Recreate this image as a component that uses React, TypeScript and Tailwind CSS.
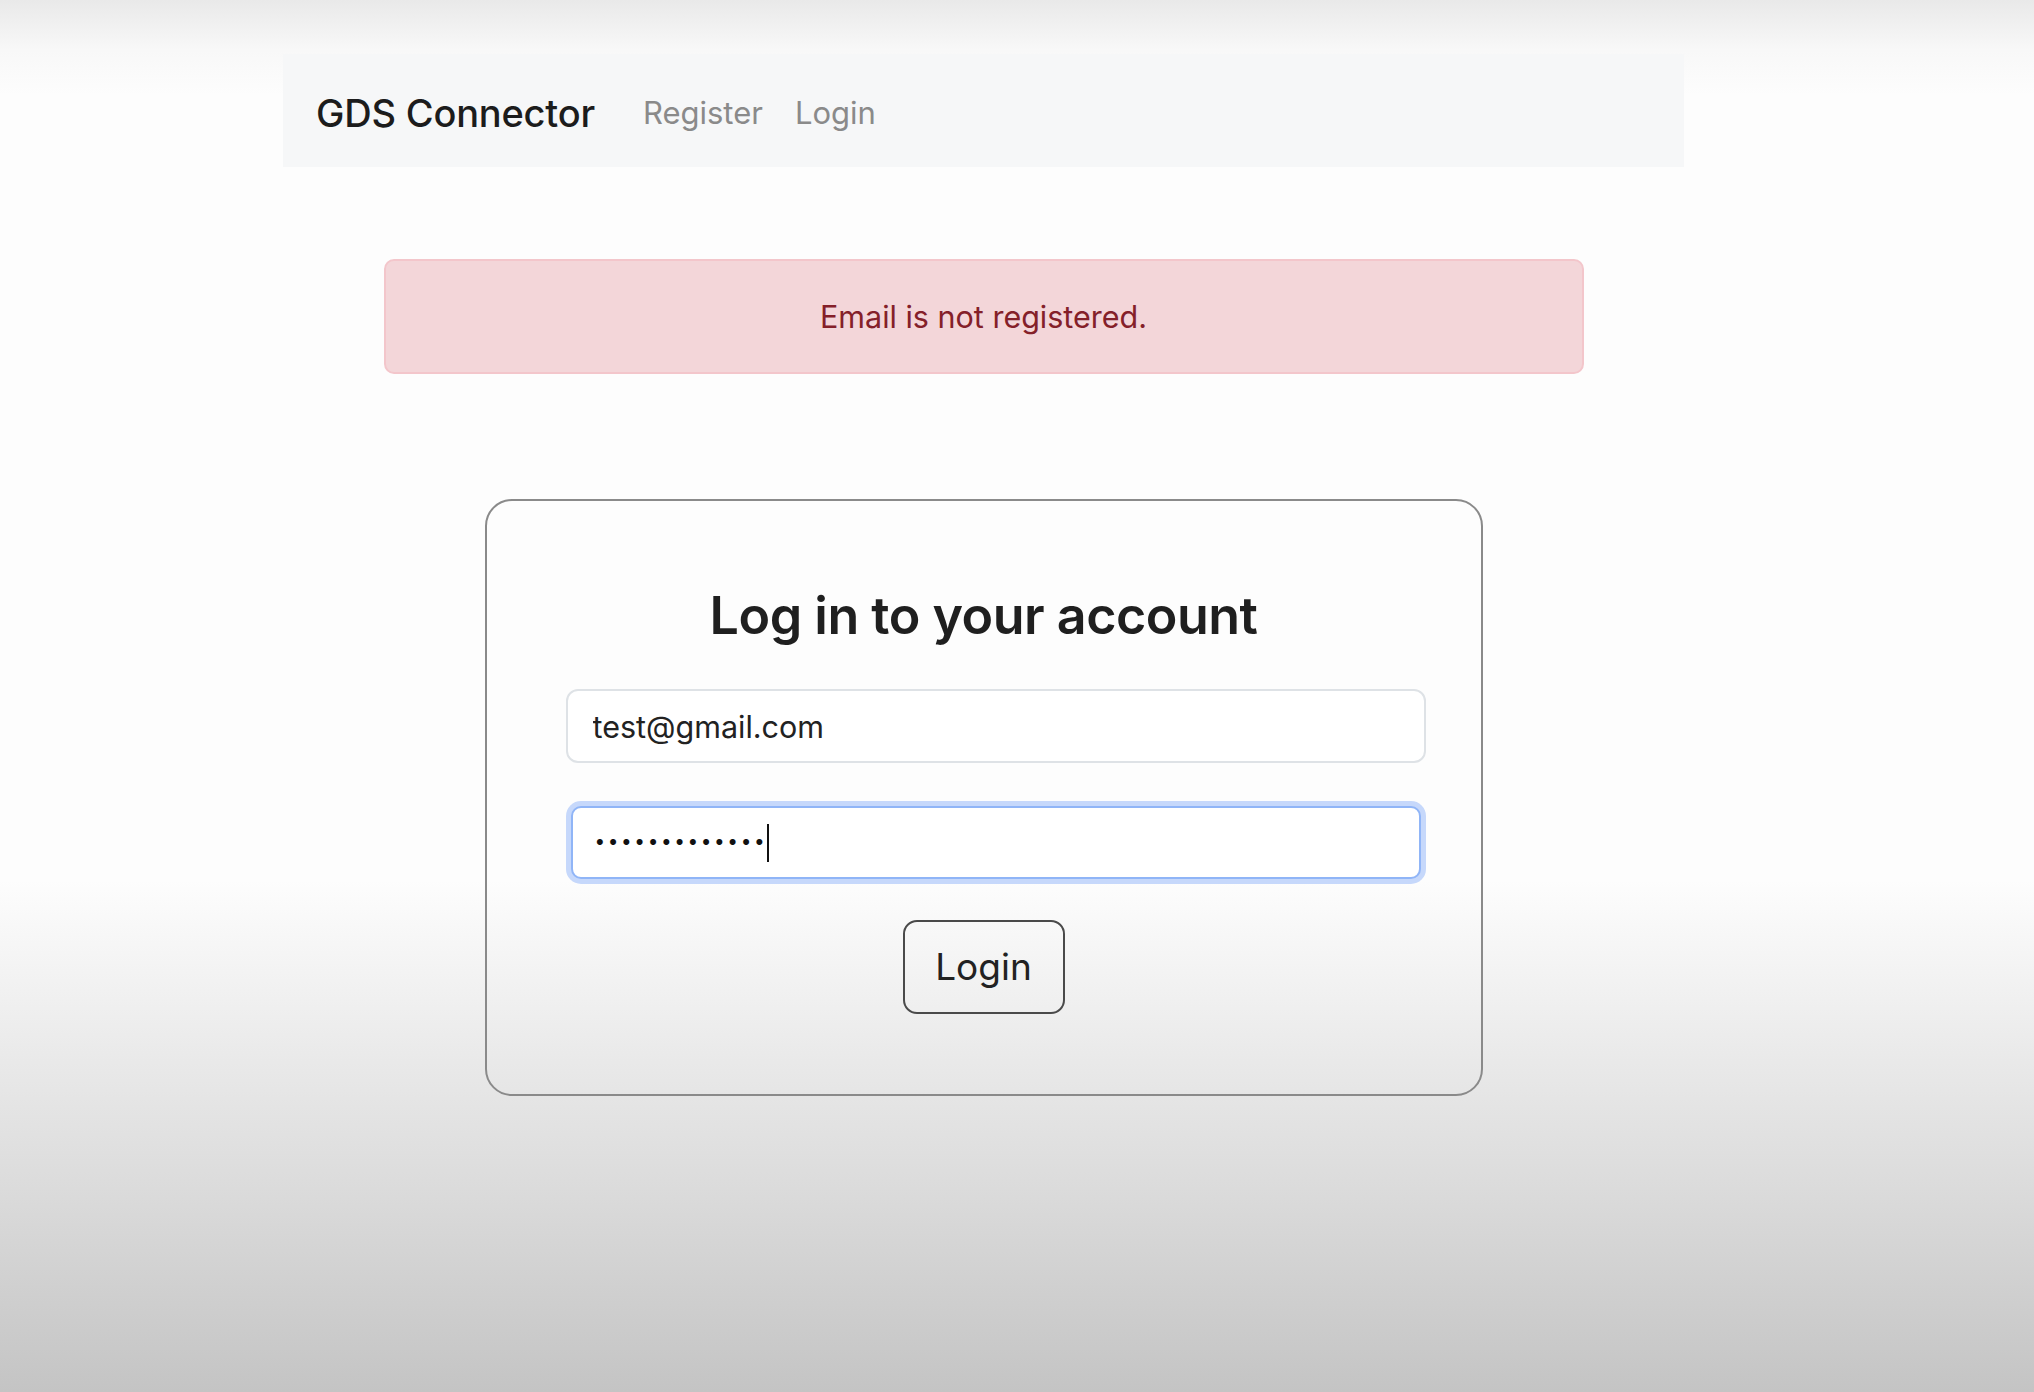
import { useState } from 'react';

export default function App() {
  const [email, setEmail] = useState('test@gmail.com');
  const dots = '•'.repeat(13);

  return (
    <div className="min-h-screen w-full bg-[linear-gradient(to_bottom,#e9e9e9_0px,#f8f8f8_50px,#fdfdfd_95px,#fdfdfd_880px,#f1f1f1_990px,#dcdcdc_1180px,#c4c4c4_1392px)] font-['Inter','Liberation_Sans',sans-serif] text-[#212529]">
      <div className="ml-[283px] w-[1401px] pt-[54px]">
        {/* navbar */}
        <nav className="flex h-[113px] items-center bg-[#f6f7f8] pl-[33px] pt-[5px]">
          <a className="text-[38px] font-medium tracking-[-0.2px] text-[#1c1c1c]">GDS Connector</a>
          <div className="ml-[48px] flex items-center gap-[32px] text-[31px] text-[#8a8a8a]">
            <a>Register</a>
            <a>Login</a>
          </div>
        </nav>

        {/* alert */}
        <div className="mx-auto mt-[92px] flex h-[115px] w-[1200px] items-center justify-center rounded-[10px] border-2 border-[#f3c6cb] bg-[#f3d6d9] text-[30.5px] text-[#842029]">
          Email is not registered.
        </div>

        {/* card */}
        <div className="mx-auto mt-[125px] h-[597px] w-[998px] rounded-[27px] border-2 border-[#8a8a8a] pt-[80px]">
          <h3 className="text-center text-[52px] font-semibold leading-[70px] tracking-[-0.5px] text-[#1f1f1f]">
            Log in to your account
          </h3>
          <form
            className="ml-[79px] mr-[55px] mt-[38px] flex flex-col"
            onSubmit={(e) => e.preventDefault()}
          >
            <input
              type="email"
              value={email}
              onChange={(e) => setEmail(e.target.value)}
              className="h-[74px] w-full rounded-[12px] border-2 border-[#dee2e6] bg-white/80 px-[25px] text-[30.5px] text-[#222] outline-none"
            />
            <div className="mt-[38px] rounded-[15px] bg-[#c6d8fb] p-[5px]">
              <div className="flex h-[73px] items-center rounded-[10px] border-2 border-[#90b5f7] bg-white px-[22px]">
                <span className="text-[19px] tracking-[2.6px] text-[#111]">{dots}</span>
                <span className="h-[38px] w-[2px] bg-[#111]" />
              </div>
            </div>
            <div className="mt-[36px] flex justify-center pr-[24px]">
              <button className="h-[94px] w-[162px] rounded-[14px] border-2 border-[#4a4a4a] text-[37px] text-[#222]">
                Login
              </button>
            </div>
          </form>
        </div>
      </div>
    </div>
  );
}
